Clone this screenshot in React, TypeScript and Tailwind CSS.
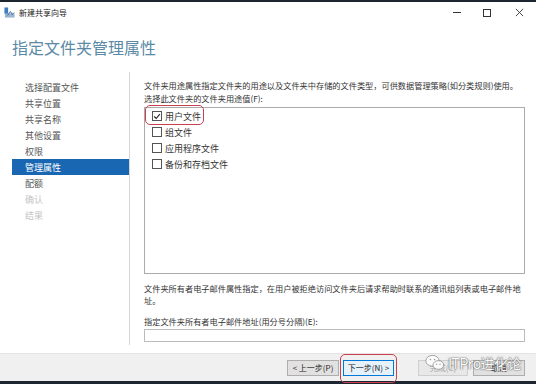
import React from 'react';

const navItems = [
  { label: '选择配置文件', state: 'done' },
  { label: '共享位置', state: 'done' },
  { label: '共享名称', state: 'done' },
  { label: '其他设置', state: 'done' },
  { label: '权限', state: 'done' },
  { label: '管理属性', state: 'active' },
  { label: '配额', state: 'done' },
  { label: '确认', state: 'disabled' },
  { label: '结果', state: 'disabled' },
];

const usages = [
  { label: '用户文件', checked: true },
  { label: '组文件', checked: false },
  { label: '应用程序文件', checked: false },
  { label: '备份和存档文件', checked: false },
];

function Checkbox({ checked }: { checked: boolean }) {
  return (
    <span className="w-[10px] h-[10px] border border-[#555] bg-white flex items-center justify-center">
      {checked && (
        <svg viewBox="0 0 10 10" className="w-[9px] h-[9px]">
          <path d="M1.5 5 L4 7.5 L8.5 2" fill="none" stroke="#222" strokeWidth={1.4} />
        </svg>
      )}
    </span>
  );
}

export default function App() {
  return (
    <div
      className="w-[536px] h-[384px] flex flex-col bg-white relative overflow-hidden text-[#333]"
      style={{ fontFamily: '"Noto Sans CJK SC", "Noto Sans", sans-serif' }}
    >
      <div className="h-[2px] bg-[#1d2531]" />

      {/* Title bar */}
      <div className="h-[21px] flex items-center pl-[4px]">
        <svg viewBox="0 0 12 12" className="w-[11px] h-[11px]">
          <rect x="0.5" y="0.5" width="4" height="7" fill="#3b7cc4" />
          <rect x="1" y="7" width="10.5" height="4.5" fill="#9bb3cc" />
          <path d="M4 9 L7 5 L9 8 L11 6" fill="none" stroke="#2a5e99" strokeWidth={1} />
        </svg>
        <span className="ml-[4px] text-[8px] text-[#222] leading-none">新建共享向导</span>
        <div className="ml-auto flex items-center h-full">
          <span className="w-[30px] flex justify-center">
            <span className="w-[8px] h-[1px] bg-[#333]" />
          </span>
          <span className="w-[30px] flex justify-center">
            <span className="w-[8px] h-[8px] border border-[#333]" />
          </span>
          <span className="w-[34px] flex justify-center">
            <svg viewBox="0 0 10 10" className="w-[9px] h-[9px]">
              <path d="M1 1 L9 9 M9 1 L1 9" stroke="#333" strokeWidth={1} />
            </svg>
          </span>
        </div>
      </div>

      {/* Header */}
      <div className="h-[47px] pl-[12px] flex items-center">
        <span className="text-[16px] text-[#5b8aa6] leading-none">指定文件夹管理属性</span>
      </div>

      {/* Main */}
      <div className="flex-1 flex min-h-0">
        <div className="w-[130px] shrink-0 border-r border-[#d6d6d6] mt-[2px] mb-[8px] pt-[7px] pl-[12px]">
          {navItems.map((item) => (
            <div
              key={item.label}
              className={`h-[16px] flex items-center pl-[13px] text-[9px] leading-none ${
                item.state === 'active'
                  ? 'bg-[#1967b2] text-white'
                  : item.state === 'disabled'
                  ? 'text-[#c4c4c4]'
                  : 'text-[#555]'
              }`}
            >
              {item.label}
            </div>
          ))}
        </div>

        <div className="flex-1 min-w-0 pl-[14px] pr-[11px] pt-[9px] flex flex-col text-[8.2px] leading-[13px] text-[#333]">
          <p className="whitespace-nowrap">文件夹用途属性指定文件夹的用途以及文件夹中存储的文件类型，可供数据管理策略(如分类规则)使用。</p>
          <p>选择此文件夹的文件夹用途值(F):</p>
          <div className="mt-[2px] h-[167px] border border-[#ababab]">
            {usages.map((u, i) => (
              <div key={u.label} className="relative h-[16px] flex items-center pl-[7px] gap-[3px]">
                <Checkbox checked={u.checked} />
                <span className="text-[9px]">{u.label}</span>
                {i === 0 && (
                  <span className="absolute left-[0px] top-[-3px] w-[59px] h-[20px] border-[1.5px] border-[#c9414f] rounded-[5px]" />
                )}
              </div>
            ))}
          </div>
          <p className="mt-[8px] leading-[12px] break-all">
            文件夹所有者电子邮件属性指定，在用户被拒绝访问文件夹后请求帮助时联系的通讯组列表或电子邮件地址。
          </p>
          <p className="mt-[9px]">指定文件夹所有者电子邮件地址(用分号分隔)(E):</p>
          <div className="mt-[1px] h-[13px] border border-[#bcbcbc]" />
        </div>
      </div>

      {/* Footer */}
      <div className="h-[28px] bg-[#f0f0f0] border-t border-[#e3e3e3] flex items-center justify-end pr-[11px] text-[8px]">
        <button className="w-[52px] h-[16px] border border-[#adadad] bg-[#e1e1e1] text-[#222] leading-none">
          &lt; 上一步(P)
        </button>
        <div className="relative ml-[4px]">
          <button className="w-[51px] h-[16px] border border-[#0078d7] bg-[#e5f1fb] text-[#222] leading-none">
            下一步(N) &gt;
          </button>
          <span className="absolute left-[-3px] top-[-6px] w-[57px] h-[29px] border-[1.5px] border-[#c9414f] rounded-[5px]" />
        </div>
        <button className="ml-[24px] w-[50px] h-[16px] border border-[#cfcfcf] bg-[#e8e8e8] text-[#a8a8a8] leading-none">
          完成(C)
        </button>
        <button className="ml-[5px] w-[52px] h-[16px] border border-[#adadad] bg-[#e1e1e1] text-[#222] leading-none">
          取消
        </button>
      </div>
      <div className="h-[3px] bg-[#1d2531]" />

      {/* Watermark */}
      <div className="absolute left-[425px] top-[354px] flex items-center gap-[3px] opacity-90">
        <svg viewBox="0 0 24 20" className="w-[20px] h-[17px]">
          <ellipse cx="9" cy="8" rx="8" ry="6.5" fill="white" stroke="#8a8a8a" strokeWidth={1} />
          <ellipse cx="16" cy="13" rx="6.5" ry="5.2" fill="white" stroke="#8a8a8a" strokeWidth={1} />
          <circle cx="6.5" cy="6.5" r="0.9" fill="#8a8a8a" />
          <circle cx="11.5" cy="6.5" r="0.9" fill="#8a8a8a" />
          <circle cx="14" cy="12" r="0.8" fill="#8a8a8a" />
          <circle cx="18" cy="12" r="0.8" fill="#8a8a8a" />
        </svg>
        <span
          className="text-[14px] leading-none text-white tracking-[-0.5px]"
          style={{ textShadow: '0 0 1px #666, 0 0 1px #666, 0 0 2px #777' }}
        >
          ITPro进化论
        </span>
      </div>
    </div>
  );
}
